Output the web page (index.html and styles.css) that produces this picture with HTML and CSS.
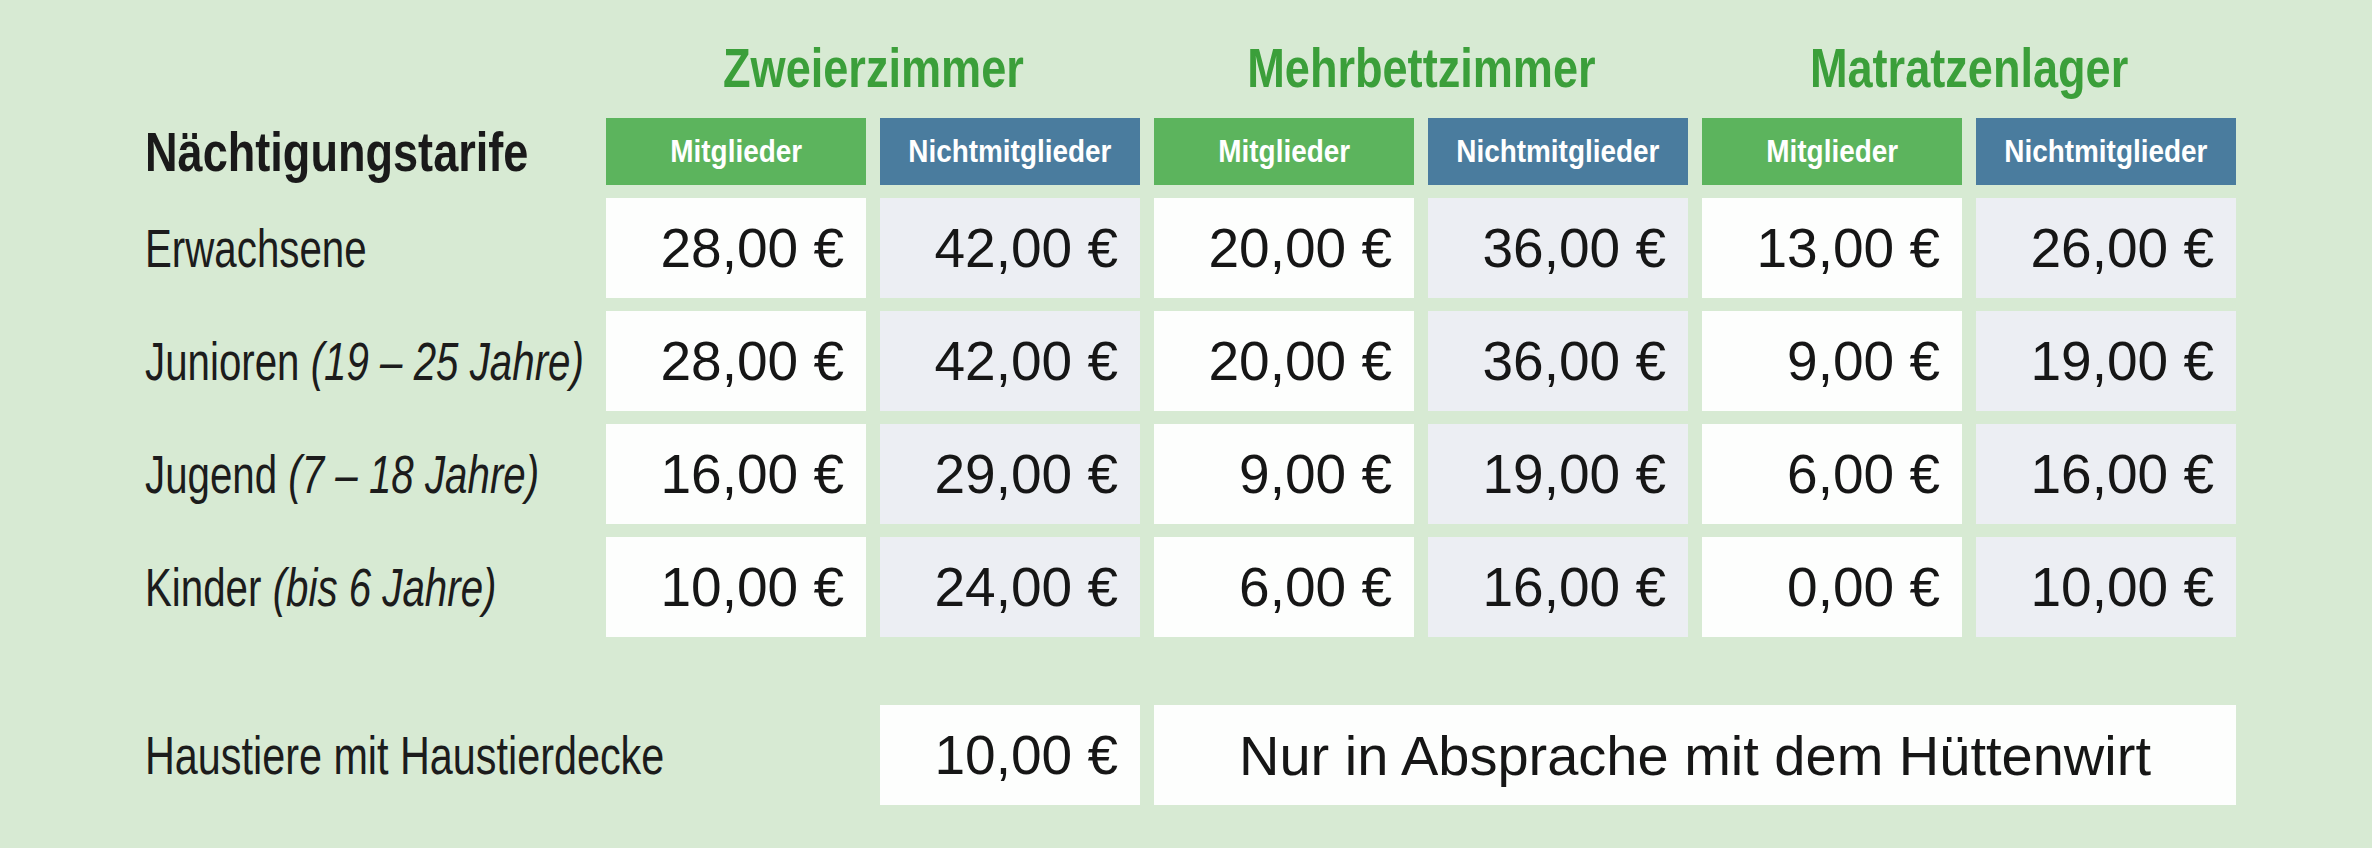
FILE: index.html
```html
<!DOCTYPE html>
<html lang="de">
<head>
<meta charset="utf-8">
<title>Nächtigungstarife</title>
<link rel="stylesheet" href="styles.css">
</head>
<body>
<div class="sheet">
  <div class="tarife">
    <div class="blank"></div>
    <div class="group"><span class="t">Zweierzimmer</span></div>
    <div class="group"><span class="t">Mehrbettzimmer</span></div>
    <div class="group"><span class="t">Matratzenlager</span></div>

    <div class="label heading"><span class="t">Nächtigungstarife</span></div>
    <div class="head member"><span class="t">Mitglieder</span></div>
    <div class="head guest"><span class="t">Nichtmitglieder</span></div>
    <div class="head member"><span class="t">Mitglieder</span></div>
    <div class="head guest"><span class="t">Nichtmitglieder</span></div>
    <div class="head member"><span class="t">Mitglieder</span></div>
    <div class="head guest"><span class="t">Nichtmitglieder</span></div>

    <div class="label"><span class="t">Erwachsene</span></div>
    <div class="price member">28,00 €</div>
    <div class="price guest">42,00 €</div>
    <div class="price member">20,00 €</div>
    <div class="price guest">36,00 €</div>
    <div class="price member">13,00 €</div>
    <div class="price guest">26,00 €</div>

    <div class="label"><span class="t">Junioren <em>(19 – 25 Jahre)</em></span></div>
    <div class="price member">28,00 €</div>
    <div class="price guest">42,00 €</div>
    <div class="price member">20,00 €</div>
    <div class="price guest">36,00 €</div>
    <div class="price member">9,00 €</div>
    <div class="price guest">19,00 €</div>

    <div class="label"><span class="t">Jugend <em>(7 – 18 Jahre)</em></span></div>
    <div class="price member">16,00 €</div>
    <div class="price guest">29,00 €</div>
    <div class="price member">9,00 €</div>
    <div class="price guest">19,00 €</div>
    <div class="price member">6,00 €</div>
    <div class="price guest">16,00 €</div>

    <div class="label"><span class="t">Kinder <em>(bis 6 Jahre)</em></span></div>
    <div class="price member">10,00 €</div>
    <div class="price guest">24,00 €</div>
    <div class="price member">6,00 €</div>
    <div class="price guest">16,00 €</div>
    <div class="price member">0,00 €</div>
    <div class="price guest">10,00 €</div>

    <div class="spacer"></div>

    <div class="label wide"><span class="t">Haustiere mit Haustierdecke</span></div>
    <div class="blank"></div>
    <div class="price plain">10,00 €</div>
    <div class="note">Nur in Absprache mit dem Hüttenwirt</div>
  </div>
</div>
</body>
</html>
```

FILE: styles.css
```css
html, body {
  margin: 0;
  padding: 0;
}

body {
  width: 2372px;
  height: 848px;
  overflow: hidden;
  background: #d7ead3;
  font-family: "Liberation Sans", Arial, sans-serif;
  color: #1c1c1c;
}

.sheet {
  width: 2372px;
  height: 848px;
}

.tarife {
  display: grid;
  grid-template-columns: 447px repeat(6, 260px);
  grid-template-rows: 75px 67px repeat(4, 100px) 42px 100px;
  column-gap: 14px;
  row-gap: 13px;
  padding: 30px 0 0 145px;
}

.spacer {
  grid-column: 1 / -1;
}

.t {
  display: inline-block;
  white-space: nowrap;
}

.group {
  grid-column: span 2;
  display: flex;
  align-items: center;
  justify-content: center;
  color: #3b9f3a;
  font-weight: bold;
  font-size: 55px;
}

.group .t {
  transform: scaleX(0.82);
}

.label {
  display: flex;
  align-items: center;
  font-size: 53px;
  white-space: nowrap;
}

.label .t {
  transform: scaleX(0.76);
  transform-origin: left center;
}

.label.wide .t {
  transform: scaleX(0.78);
}

.label em {
  font-style: italic;
}

.label.heading {
  font-weight: bold;
  font-size: 55px;
  color: #1a1a1a;
}

.label.heading .t {
  transform: scaleX(0.82);
}

.head {
  display: flex;
  align-items: center;
  justify-content: center;
  color: #ffffff;
  font-weight: bold;
  font-size: 31px;
}

.head .t {
  transform: scaleX(0.9);
}

.head.member {
  background: #5cb45d;
}

.head.guest {
  background: #4a7c9e;
}

.price {
  display: flex;
  align-items: center;
  justify-content: flex-end;
  padding-right: 22px;
  font-size: 55px;
  color: #161616;
}

.price.member,
.price.plain {
  background: #fdfefd;
}

.price.guest {
  background: #eceef3;
}

.note {
  grid-column: span 4;
  display: flex;
  align-items: center;
  justify-content: center;
  background: #fdfefd;
  font-size: 56px;
  color: #161616;
}
```
